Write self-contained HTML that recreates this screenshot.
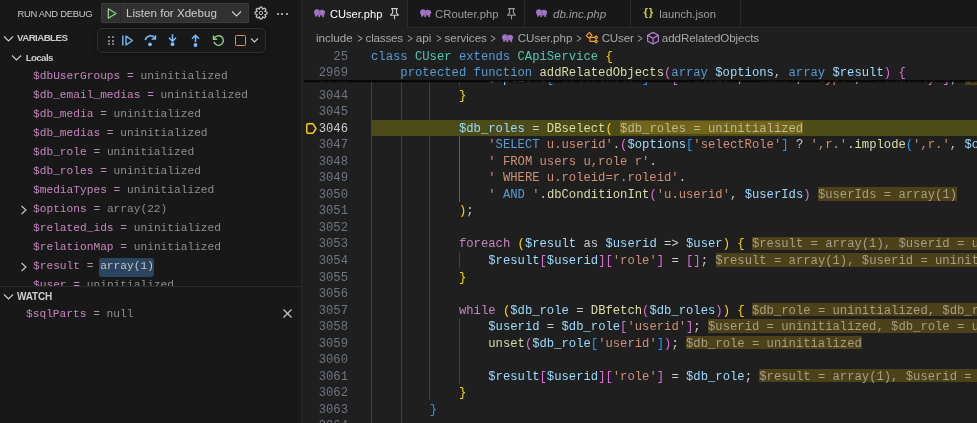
<!DOCTYPE html>
<html><head><meta charset="utf-8">
<style>
*{margin:0;padding:0;box-sizing:border-box}
html,body{width:977px;height:423px;overflow:hidden;background:#181818}
body{position:relative;font-family:"Liberation Sans",sans-serif;color:#cccccc}
#side,#editor{will-change:transform}
.a{position:absolute}
#side{position:absolute;left:0;top:0;width:301px;height:423px;background:#181818;overflow:hidden}
#sideborder{position:absolute;left:301px;top:0;width:1px;height:423px;background:#2b2b2b}
#editor{position:absolute;left:302px;top:0;width:675px;height:423px;background:#1f1f1f;overflow:hidden}
.t{position:absolute;white-space:pre;font-family:"Liberation Sans",sans-serif}
.m{position:absolute;white-space:pre;font-family:"Liberation Mono",monospace}
.vr{font-size:11.2px;line-height:19px;height:19px;color:#8e8e8e}
.vn{color:#c586c0}.eq{color:#b98ab6}
.tab{position:absolute;top:0;height:28px;background:#181818;border-right:1px solid #2b2b2b;border-bottom:1px solid #2b2b2b}
.tab.act{background:#1f1f1f;border-bottom:none}
.tt{position:absolute;top:0;font-size:11.6px;line-height:27px;color:#9d9d9d;white-space:pre}
.act .tt{color:#ffffff}
.bc{position:absolute;top:28px;font-size:11.6px;line-height:19px;color:#a9a9a9;white-space:pre}
.ln{position:absolute;left:0;width:46px;text-align:right;font-family:"Liberation Mono",monospace;font-size:12.215px;white-space:pre;color:#6e7681;height:16.52px;line-height:16.52px}
.cl{position:absolute;left:69.0px;font-family:"Liberation Mono",monospace;font-size:12.215px;white-space:pre;color:#cccccc;height:16.52px;line-height:16.52px}
.g{position:absolute;width:1px;background:#404040}
.g.ac{background:#606060}
.k{color:#569cd6}.c{color:#4ec9b0}.f{color:#dcdcaa}.v{color:#9cdcfe}.s{color:#ce9178}.p{color:#c586c0}
.b1{color:#ffd700}.b2{color:#da70d6}.b3{color:#179fff}.o{color:#cccccc}
.iv{color:#a79f87}
.iv2{color:#c0b894}
</style></head><body>
<div id="side">
<div class="t" style="left:17.5px;top:4px;font-size:9.4px;letter-spacing:-0.26px;line-height:19px;color:#cccccc">RUN AND DEBUG</div>
<div class="a" style="left:101px;top:3px;width:148px;height:20px;background:#313131;border:1px solid #3c3c3c;border-radius:1px"></div>
<div class="a" style="left:120px;top:4px;width:1px;height:18px;background:#2a2a2a"></div>
<svg class="a" style="left:106px;top:7px" width="12" height="13" viewBox="0 0 12 13"><path d="M2.3 1.8 L10 6.5 L2.3 11.2 Z" fill="none" stroke="#89d185" stroke-width="1.3" stroke-linejoin="round"/></svg>
<div class="t" style="left:126px;top:3px;font-size:11.6px;line-height:20px;color:#cccccc">Listen for Xdebug</div>
<svg class="a" style="left:231px;top:9px" width="11" height="9" viewBox="0 0 11 9"><path d="M1 2.5 L5.5 7 L10 2.5" fill="none" stroke="#cccccc" stroke-width="1.1"/></svg>
<svg class="a" style="left:253.4px;top:5.4px" width="16" height="16" viewBox="0 0 16 16"><path fill="none" stroke="#cccccc" stroke-width="1.15" stroke-linejoin="round" d="M11.91 6.47 L13.92 7.01 L13.92 8.99 L11.91 9.53 L11.85 9.68 L12.88 11.49 L11.49 12.88 L9.68 11.85 L9.53 11.91 L8.99 13.92 L7.01 13.92 L6.47 11.91 L6.32 11.85 L4.51 12.88 L3.12 11.49 L4.15 9.68 L4.09 9.53 L2.08 8.99 L2.08 7.01 L4.09 6.47 L4.15 6.32 L3.12 4.51 L4.51 3.12 L6.32 4.15 L6.47 4.09 L7.01 2.08 L8.99 2.08 L9.53 4.09 L9.68 4.15 L11.49 3.12 L12.88 4.51 L11.85 6.32 Z"/><circle cx="8" cy="8" r="1.7" fill="none" stroke="#cccccc" stroke-width="0.9"/></svg>
<div class="a" style="left:276.90px;top:12.6px;width:2px;height:2px;border-radius:50%;background:#d0d0d0"></div>
<div class="a" style="left:281.20px;top:12.6px;width:2px;height:2px;border-radius:50%;background:#d0d0d0"></div>
<div class="a" style="left:285.70px;top:12.6px;width:2px;height:2px;border-radius:50%;background:#d0d0d0"></div>
<svg class="a" style="left:3.3px;top:34px" width="11" height="10" viewBox="0 0 11 10"><path d="M1 2.5 L5.5 7 L10 2.5" fill="none" stroke="#cccccc" stroke-width="1.1"/></svg>
<div class="t" style="left:17px;top:28px;font-size:9.8px;font-weight:bold;letter-spacing:-0.62px;line-height:19px;color:#cccccc">VARIABLES</div>
<svg class="a" style="left:11.3px;top:53px" width="11" height="10" viewBox="0 0 11 10"><path d="M1 2.5 L5.5 7 L10 2.5" fill="none" stroke="#cccccc" stroke-width="1.1"/></svg>
<div class="t" style="left:25.7px;top:47.6px;font-size:9.7px;font-weight:bold;letter-spacing:-0.6px;line-height:19px;color:#cccccc">Locals</div>
<div class="m vr" style="left:33px;top:67.4px"><span class="vn">$dbUserGroups</span><span class="eq"> = </span>uninitialized</div>
<div class="m vr" style="left:33px;top:86.4px"><span class="vn">$db_email_medias</span><span class="eq"> = </span>uninitialized</div>
<div class="m vr" style="left:33px;top:105.4px"><span class="vn">$db_media</span><span class="eq"> = </span>uninitialized</div>
<div class="m vr" style="left:33px;top:124.4px"><span class="vn">$db_medias</span><span class="eq"> = </span>uninitialized</div>
<div class="m vr" style="left:33px;top:143.4px"><span class="vn">$db_role</span><span class="eq"> = </span>uninitialized</div>
<div class="m vr" style="left:33px;top:162.4px"><span class="vn">$db_roles</span><span class="eq"> = </span>uninitialized</div>
<div class="m vr" style="left:33px;top:181.4px"><span class="vn">$mediaTypes</span><span class="eq"> = </span>uninitialized</div>
<svg class="a" style="left:19px;top:205.4px" width="9" height="10" viewBox="0 0 9 10"><path d="M2.5 1 L7 5 L2.5 9" fill="none" stroke="#cccccc" stroke-width="1.1"/></svg>
<div class="m vr" style="left:33px;top:200.4px"><span class="vn">$options</span><span class="eq"> = </span>array(22)</div>
<div class="m vr" style="left:33px;top:219.4px"><span class="vn">$related_ids</span><span class="eq"> = </span>uninitialized</div>
<div class="m vr" style="left:33px;top:238.4px"><span class="vn">$relationMap</span><span class="eq"> = </span>uninitialized</div>
<svg class="a" style="left:19px;top:262.4px" width="9" height="10" viewBox="0 0 9 10"><path d="M2.5 1 L7 5 L2.5 9" fill="none" stroke="#cccccc" stroke-width="1.1"/></svg>
<div class="a" style="left:99px;top:258.0px;width:55px;height:18.6px;background:#2b4560;border-radius:3px"></div>
<div class="m vr" style="left:33px;top:257.4px"><span class="vn">$result</span><span class="eq"> = </span><span style="color:#c4c4c4">array(1)</span></div>
<div class="m vr" style="left:33px;top:276.4px"><span class="vn">$user</span><span class="eq"> = </span>uninitialized</div>
<div class="a" style="left:0;top:286px;width:301px;height:137px;background:#181818;border-top:1px solid #2b2b2b"></div>
<svg class="a" style="left:3.3px;top:292px" width="11" height="10" viewBox="0 0 11 10"><path d="M1 2.5 L5.5 7 L10 2.5" fill="none" stroke="#cccccc" stroke-width="1.1"/></svg>
<div class="t" style="left:17px;top:286.5px;font-size:10px;font-weight:bold;letter-spacing:-0.15px;line-height:19px;color:#cccccc">WATCH</div>
<div class="m vr" style="left:26px;top:304.8px"><span class="vn">$sqlParts</span><span class="eq"> = </span>null</div>
<svg class="a" style="left:282px;top:308px" width="11" height="11" viewBox="0 0 11 11"><path d="M1.5 1.5 L9.5 9.5 M9.5 1.5 L1.5 9.5" fill="none" stroke="#cccccc" stroke-width="1.1"/></svg>
<div class="a" style="left:97px;top:28px;width:169px;height:25px;background:#181818;border:1px solid #313131;border-radius:5px;box-shadow:0 0 6px rgba(0,0,0,0.45)"></div>
<div class="a" style="left:107.8px;top:36px;width:2.2px;height:2.2px;border-radius:0.4px;background:#8f8f8f"></div>
<div class="a" style="left:107.8px;top:39.6px;width:2.2px;height:2.2px;border-radius:0.4px;background:#8f8f8f"></div>
<div class="a" style="left:107.8px;top:43.2px;width:2.2px;height:2.2px;border-radius:0.4px;background:#8f8f8f"></div>
<div class="a" style="left:111.8px;top:36px;width:2.2px;height:2.2px;border-radius:0.4px;background:#8f8f8f"></div>
<div class="a" style="left:111.8px;top:39.6px;width:2.2px;height:2.2px;border-radius:0.4px;background:#8f8f8f"></div>
<div class="a" style="left:111.8px;top:43.2px;width:2.2px;height:2.2px;border-radius:0.4px;background:#8f8f8f"></div>
<svg class="a" style="left:120px;top:33px" width="15" height="15" viewBox="0 0 15 15"><path d="M2.8 2.5 V12.5" stroke="#75beff" stroke-width="1.4"/><path d="M6 3 L12.5 7.5 L6 12 Z" fill="none" stroke="#75beff" stroke-width="1.3" stroke-linejoin="round"/></svg>
<svg class="a" style="left:143px;top:33px" width="15" height="15" viewBox="0 0 15 15"><path d="M2.3 7.2 A5.2 5.2 0 0 1 11.6 5" fill="none" stroke="#75beff" stroke-width="1.5"/><path d="M12.4 2.2 V6 H8.6" fill="none" stroke="#75beff" stroke-width="1.5"/><circle cx="7" cy="11.3" r="1.9" fill="#75beff"/></svg>
<svg class="a" style="left:165px;top:33px" width="15" height="15" viewBox="0 0 15 15"><path d="M7.5 1.3 V8 M4 4.8 L7.5 8.3 L11 4.8" fill="none" stroke="#75beff" stroke-width="1.5"/><circle cx="7.5" cy="11.2" r="1.9" fill="#75beff"/></svg>
<svg class="a" style="left:188px;top:33px" width="15" height="15" viewBox="0 0 15 15"><path d="M7.5 2.2 V9 M4 5.7 L7.5 2.2 L11 5.7" fill="none" stroke="#75beff" stroke-width="1.5"/><circle cx="7.5" cy="12" r="1.9" fill="#75beff"/></svg>
<svg class="a" style="left:211px;top:33px" width="15" height="15" viewBox="0 0 15 15"><path d="M3.2 5.5 A4.8 4.8 0 1 1 3 9" fill="none" stroke="#89d185" stroke-width="1.4"/><path d="M2.5 2.5 V6.2 H6.2" fill="none" stroke="#89d185" stroke-width="1.4"/></svg>
<div class="a" style="left:234.8px;top:34.8px;width:11.4px;height:11.4px;border:1.4px solid #f48771;border-radius:1.5px"></div>
<svg class="a" style="left:250px;top:37px" width="9" height="7" viewBox="0 0 9 7"><path d="M1 1.5 L4.5 5 L8 1.5" fill="none" stroke="#cccccc" stroke-width="1.1"/></svg>
</div>
<div id="sideborder"></div>
<div id="editor">
<div class="g" style="left:69px;top:69.98px;height:363.44px"></div>
<div class="g" style="left:99px;top:69.98px;height:363.44px"></div>
<div class="g" style="left:127px;top:69.98px;height:330.40px"></div>
<div class="g ac" style="left:157px;top:136.06px;height:66.08px"></div>
<div class="g" style="left:157px;top:251.70px;height:16.52px"></div>
<div class="g" style="left:157px;top:317.78px;height:66.08px"></div>
<div class="g" style="left:157px;top:69.98px;height:16.52px"></div>
<div class="a" style="left:69.0px;top:119.54px;width:700px;height:16.52px;background:#4c4c19"></div>
<div class="ln" style="top:71.28px;color:#6e7681">3043</div>
<div class="a" style="left:662.73px;top:71.38px;width:146.10px;height:13.5px;background:#4c4119"></div>
<div class="cl" style="left:186.28px;top:71.28px"><span class="v">$options</span><span class="b3">[</span><span class="s">'selectRole'</span><span class="b3">]</span><span class="o"> = </span><span class="b2">[</span><span class="s">'roleid'</span><span class="o">, </span><span class="s">'name'</span><span class="o">, </span><span class="s">'type'</span><span class="o">, </span><span class="s">'readonly'</span><span class="b2">]</span><span class="o">; </span><span class="iv">$options = array(22)</span></div>
<div class="ln" style="top:87.80px;color:#6e7681">3044</div>
<div class="cl" style="left:156.96px;top:87.80px"><span class="b1">}</span></div>
<div class="ln" style="top:104.32px;color:#6e7681">3045</div>
<div class="ln" style="top:120.84px;color:#cccccc">3046</div>
<div class="a" style="left:318.22px;top:120.94px;width:182.75px;height:13.5px;background:#70651a"></div>
<div class="cl" style="left:156.96px;top:120.84px"><span class="v">$db_roles</span><span class="o"> = </span><span class="f">DBselect</span><span class="b1">(</span><span class="o"> </span><span class="iv2">$db_roles = uninitialized</span></div>
<div class="ln" style="top:137.36px;color:#6e7681">3047</div>
<div class="cl" style="left:186.28px;top:137.36px"><span class="s">'</span><span class="k">SELECT</span><span class="s"> u.userid'</span><span class="o">.</span><span class="b2">(</span><span class="v">$options</span><span class="b3">[</span><span class="s">'selectRole'</span><span class="b3">]</span><span class="o"> ? </span><span class="s">',r.'</span><span class="o">.</span><span class="f">implode</span><span class="b3">(</span><span class="s">',r.'</span><span class="o">, </span><span class="v">$options</span></div>
<div class="ln" style="top:153.88px;color:#6e7681">3048</div>
<div class="cl" style="left:186.28px;top:153.88px"><span class="s">' FROM users u,role r'</span><span class="o">.</span></div>
<div class="ln" style="top:170.40px;color:#6e7681">3049</div>
<div class="cl" style="left:186.28px;top:170.40px"><span class="s">' WHERE u.roleid=r.roleid'</span><span class="o">.</span></div>
<div class="ln" style="top:186.92px;color:#6e7681">3050</div>
<div class="a" style="left:516.13px;top:187.02px;width:138.77px;height:13.5px;background:#4c4119"></div>
<div class="cl" style="left:186.28px;top:186.92px"><span class="s">' </span><span class="k">AND</span><span class="s"> '</span><span class="o">.</span><span class="f">dbConditionInt</span><span class="b2">(</span><span class="s">'u.userid'</span><span class="o">, </span><span class="v">$userIds</span><span class="b2">)</span><span class="o"> </span><span class="iv">$userIds = array(1)</span></div>
<div class="ln" style="top:203.44px;color:#6e7681">3051</div>
<div class="cl" style="left:156.96px;top:203.44px"><span class="b1">)</span><span class="o">;</span></div>
<div class="ln" style="top:219.96px;color:#6e7681">3052</div>
<div class="ln" style="top:236.48px;color:#6e7681">3053</div>
<div class="a" style="left:450.16px;top:236.58px;width:314.69px;height:13.5px;background:#4c4119"></div>
<div class="cl" style="left:156.96px;top:236.48px"><span class="p">foreach</span><span class="o"> </span><span class="b1">(</span><span class="v">$result</span><span class="o"> as </span><span class="v">$userid</span><span class="o"> =&gt; </span><span class="v">$user</span><span class="b1">)</span><span class="o"> </span><span class="b1">{</span><span class="o"> </span><span class="iv">$result = array(1), $userid = uninitialized</span></div>
<div class="ln" style="top:253.00px;color:#6e7681">3054</div>
<div class="a" style="left:413.51px;top:253.10px;width:314.69px;height:13.5px;background:#4c4119"></div>
<div class="cl" style="left:186.28px;top:253.00px"><span class="v">$result</span><span class="b2">[</span><span class="v">$userid</span><span class="b2">]</span><span class="b2">[</span><span class="s">'role'</span><span class="b2">]</span><span class="o"> = </span><span class="b2">[]</span><span class="o">; </span><span class="iv">$result = array(1), $userid = uninitialized</span></div>
<div class="ln" style="top:269.52px;color:#6e7681">3055</div>
<div class="cl" style="left:156.96px;top:269.52px"><span class="b1">}</span></div>
<div class="ln" style="top:286.04px;color:#6e7681">3056</div>
<div class="ln" style="top:302.56px;color:#6e7681">3057</div>
<div class="a" style="left:450.16px;top:302.66px;width:373.33px;height:13.5px;background:#4c4119"></div>
<div class="cl" style="left:156.96px;top:302.56px"><span class="p">while</span><span class="o"> </span><span class="b1">(</span><span class="v">$db_role</span><span class="o"> = </span><span class="f">DBfetch</span><span class="b2">(</span><span class="v">$db_roles</span><span class="b2">)</span><span class="b1">)</span><span class="o"> </span><span class="b1">{</span><span class="o"> </span><span class="iv">$db_role = uninitialized, $db_roles = uninitialized</span></div>
<div class="ln" style="top:319.08px;color:#6e7681">3058</div>
<div class="a" style="left:406.18px;top:319.18px;width:358.67px;height:13.5px;background:#4c4119"></div>
<div class="cl" style="left:186.28px;top:319.08px"><span class="v">$userid</span><span class="o"> = </span><span class="v">$db_role</span><span class="b2">[</span><span class="s">'userid'</span><span class="b2">]</span><span class="o">; </span><span class="iv">$userid = uninitialized, $db_role = uninitialized</span></div>
<div class="ln" style="top:335.60px;color:#6e7681">3059</div>
<div class="a" style="left:384.19px;top:335.70px;width:175.42px;height:13.5px;background:#4c4119"></div>
<div class="cl" style="left:186.28px;top:335.60px"><span class="f">unset</span><span class="b2">(</span><span class="v">$db_role</span><span class="b3">[</span><span class="s">'userid'</span><span class="b3">]</span><span class="b2">)</span><span class="o">; </span><span class="iv">$db_role = uninitialized</span></div>
<div class="ln" style="top:352.12px;color:#6e7681">3060</div>
<div class="ln" style="top:368.64px;color:#6e7681">3061</div>
<div class="a" style="left:457.49px;top:368.74px;width:314.69px;height:13.5px;background:#4c4119"></div>
<div class="cl" style="left:186.28px;top:368.64px"><span class="v">$result</span><span class="b2">[</span><span class="v">$userid</span><span class="b2">]</span><span class="b2">[</span><span class="s">'role'</span><span class="b2">]</span><span class="o"> = </span><span class="v">$db_role</span><span class="o">; </span><span class="iv">$result = array(1), $userid = uninitialized</span></div>
<div class="ln" style="top:385.16px;color:#6e7681">3062</div>
<div class="cl" style="left:156.96px;top:385.16px"><span class="b1">}</span></div>
<div class="ln" style="top:401.68px;color:#6e7681">3063</div>
<div class="cl" style="left:127.64px;top:401.68px"><span class="b3">}</span></div>
<div class="ln" style="top:418.20px;color:#6e7681">3064</div>
<svg class="a" style="left:3px;top:122px" width="14" height="13" viewBox="0 0 14 13"><path d="M2.8 1.8 H8 L11 6.5 L8 11.2 H2.8 Q1.8 11.2 1.8 10.2 V2.8 Q1.8 1.8 2.8 1.8 Z" fill="none" stroke="#ffcc00" stroke-width="1.5" stroke-linejoin="round"/></svg>
<div class="a" style="left:0;top:48px;width:675px;height:33.04px;background:#1f1f1f"></div>
<div class="a" style="left:2px;top:80.44px;width:675px;height:2.6px;background:linear-gradient(rgba(0,0,0,0.5) 0%,#000000 35%,rgba(0,0,0,0.5) 70%,rgba(0,0,0,0) 100%)"></div>
<div class="ln" style="top:49.3px">25</div>
<div class="cl" style="top:49.3px"><span class="k">class</span><span class="o"> </span><span class="c">CUser</span><span class="o"> </span><span class="k">extends</span><span class="o"> </span><span class="c">CApiService</span><span class="o"> </span><span class="b1">{</span></div>
<div class="ln" style="top:65.42px">2969</div>
<div class="cl" style="left:98.32px;top:65.42px"><span class="k">protected</span><span class="o"> </span><span class="k">function</span><span class="o"> </span><span class="f">addRelatedObjects</span><span class="b2">(</span><span class="k">array</span><span class="o"> </span><span class="v">$options</span><span class="o">, </span><span class="k">array</span><span class="o"> </span><span class="v">$result</span><span class="b2">)</span><span class="o"> </span><span class="b2">{</span></div>
<div class="a" style="left:0;top:28px;width:675px;height:20px;background:#1f1f1f"></div>
<div class="bc" style="left:13.9px;letter-spacing:0px">include</div>
<div class="bc" style="left:63.6px;letter-spacing:-0.2px">classes</div>
<div class="bc" style="left:113.8px;letter-spacing:0px">api</div>
<div class="bc" style="left:142.4px;letter-spacing:0px">services</div>
<div class="bc" style="left:215.7px;letter-spacing:0px">CUser.php</div>
<div class="bc" style="left:299.7px;letter-spacing:-0.2px">CUser</div>
<div class="bc" style="left:359.8px;letter-spacing:-0.08px">addRelatedObjects</div>
<svg class="a" style="left:54.7px;top:35px" width="7" height="7" viewBox="0 0 7 7"><path d="M0.8 0.6 L5.2 3.5 L0.8 6.4" fill="none" stroke="#a9a9a9" stroke-width="1"/></svg>
<svg class="a" style="left:104.5px;top:35px" width="7" height="7" viewBox="0 0 7 7"><path d="M0.8 0.6 L5.2 3.5 L0.8 6.4" fill="none" stroke="#a9a9a9" stroke-width="1"/></svg>
<svg class="a" style="left:133.5px;top:35px" width="7" height="7" viewBox="0 0 7 7"><path d="M0.8 0.6 L5.2 3.5 L0.8 6.4" fill="none" stroke="#a9a9a9" stroke-width="1"/></svg>
<svg class="a" style="left:187.8px;top:35px" width="7" height="7" viewBox="0 0 7 7"><path d="M0.8 0.6 L5.2 3.5 L0.8 6.4" fill="none" stroke="#a9a9a9" stroke-width="1"/></svg>
<svg class="a" style="left:274.0px;top:35px" width="7" height="7" viewBox="0 0 7 7"><path d="M0.8 0.6 L5.2 3.5 L0.8 6.4" fill="none" stroke="#a9a9a9" stroke-width="1"/></svg>
<svg class="a" style="left:334.7px;top:35px" width="7" height="7" viewBox="0 0 7 7"><path d="M0.8 0.6 L5.2 3.5 L0.8 6.4" fill="none" stroke="#a9a9a9" stroke-width="1"/></svg>
<svg class="a" style="left:200.3px;top:34.2px" width="12" height="9" viewBox="0 0 12 9"><ellipse cx="7.7" cy="3.6" rx="3.3" ry="2.8" fill="#a074c4"/><path d="M10.3 2 L11.3 3.4 L10.6 4.6 Z" fill="#a074c4"/><rect x="4.3" y="4.6" width="1.8" height="3.6" rx="0.8" fill="#a074c4"/><rect x="8.3" y="4.6" width="1.8" height="3.6" rx="0.8" fill="#a074c4"/><path d="M5.9 0.6 Q4.8 3 5.8 5.2" fill="none" stroke="#1f1f1f" stroke-width="0.9"/><ellipse cx="3.0" cy="3.3" rx="2.9" ry="3.1" fill="#a074c4"/><rect x="1.1" y="4.5" width="1.9" height="3.3" rx="0.8" fill="#a074c4"/></svg>
<svg class="a" style="left:283px;top:31px" width="14" height="14" viewBox="0 0 14 14" fill="none" stroke="#ee9d28" stroke-width="1.2" stroke-linejoin="round"><path d="M1.3 4.6 L4.4 1.5 L7 4.1 L3.9 7.2 Z"/><path d="M5 6 V10.3 H10.3 M5 6.3 H10.3"/><path d="M9.6 6.3 L11.1 4.8 L12.6 6.3 L11.1 7.8 Z"/><path d="M9.6 10.3 L11.1 8.8 L12.6 10.3 L11.1 11.8 Z"/></svg>
<svg class="a" style="left:344px;top:31px" width="14" height="14" viewBox="0 0 14 14" fill="none" stroke="#b180d7" stroke-width="1.2" stroke-linejoin="round"><path d="M7 1.4 L12.4 4.3 V10.2 L7 13 L1.6 10.2 V4.3 Z"/><path d="M1.8 4.4 L7 7.2 L12.2 4.4 M7 7.2 V12.8"/></svg>
<div class="a" style="left:0;top:0;width:675px;height:28px;background:#181818;border-bottom:1px solid #2b2b2b"></div>
<div class="a" style="left:0;top:0;width:105px;height:28px;background:#1f1f1f"></div>
<div class="a" style="left:105px;top:0;width:1px;height:27px;background:#2b2b2b"></div>
<div class="a" style="left:222px;top:0;width:1px;height:27px;background:#2b2b2b"></div>
<div class="a" style="left:328px;top:0;width:1px;height:27px;background:#2b2b2b"></div>
<div class="a" style="left:438px;top:0;width:1px;height:27px;background:#2b2b2b"></div>
<svg class="a" style="left:12.0px;top:8.7px" width="12" height="9" viewBox="0 0 12 9"><ellipse cx="7.7" cy="3.6" rx="3.3" ry="2.8" fill="#a074c4"/><path d="M10.3 2 L11.3 3.4 L10.6 4.6 Z" fill="#a074c4"/><rect x="4.3" y="4.6" width="1.8" height="3.6" rx="0.8" fill="#a074c4"/><rect x="8.3" y="4.6" width="1.8" height="3.6" rx="0.8" fill="#a074c4"/><path d="M5.9 0.6 Q4.8 3 5.8 5.2" fill="none" stroke="#1f1f1f" stroke-width="0.9"/><ellipse cx="3.0" cy="3.3" rx="2.9" ry="3.1" fill="#a074c4"/><rect x="1.1" y="4.5" width="1.9" height="3.3" rx="0.8" fill="#a074c4"/></svg>
<div class="tt" style="left:27.9px;top:1px;color:#ffffff;font-size:11.1px">CUser.php</div>
<svg class="a" style="left:87.0px;top:7px" width="11" height="13" viewBox="0 0 11 13" fill="none" stroke="#cccccc" stroke-width="1.1" stroke-linejoin="round"><path d="M2.6 1.6 H8.4 L7.4 2.9 V5.8 L9.4 8.2 H1.6 L3.6 5.8 V2.9 Z"/><path d="M5.5 8.2 V12.3"/></svg>
<svg class="a" style="left:117.6px;top:8.7px" width="12" height="9" viewBox="0 0 12 9"><ellipse cx="7.7" cy="3.6" rx="3.3" ry="2.8" fill="#a074c4"/><path d="M10.3 2 L11.3 3.4 L10.6 4.6 Z" fill="#a074c4"/><rect x="4.3" y="4.6" width="1.8" height="3.6" rx="0.8" fill="#a074c4"/><rect x="8.3" y="4.6" width="1.8" height="3.6" rx="0.8" fill="#a074c4"/><path d="M5.9 0.6 Q4.8 3 5.8 5.2" fill="none" stroke="#181818" stroke-width="0.9"/><ellipse cx="3.0" cy="3.3" rx="2.9" ry="3.1" fill="#a074c4"/><rect x="1.1" y="4.5" width="1.9" height="3.3" rx="0.8" fill="#a074c4"/></svg>
<div class="tt" style="left:133.1px;top:1px;font-size:11.3px">CRouter.php</div>
<svg class="a" style="left:203.5px;top:7px" width="11" height="13" viewBox="0 0 11 13" fill="none" stroke="#9d9d9d" stroke-width="1.1" stroke-linejoin="round"><path d="M2.6 1.6 H8.4 L7.4 2.9 V5.8 L9.4 8.2 H1.6 L3.6 5.8 V2.9 Z"/><path d="M5.5 8.2 V12.3"/></svg>
<svg class="a" style="left:234.0px;top:8.7px" width="12" height="9" viewBox="0 0 12 9"><ellipse cx="7.7" cy="3.6" rx="3.3" ry="2.8" fill="#a074c4"/><path d="M10.3 2 L11.3 3.4 L10.6 4.6 Z" fill="#a074c4"/><rect x="4.3" y="4.6" width="1.8" height="3.6" rx="0.8" fill="#a074c4"/><rect x="8.3" y="4.6" width="1.8" height="3.6" rx="0.8" fill="#a074c4"/><path d="M5.9 0.6 Q4.8 3 5.8 5.2" fill="none" stroke="#181818" stroke-width="0.9"/><ellipse cx="3.0" cy="3.3" rx="2.9" ry="3.1" fill="#a074c4"/><rect x="1.1" y="4.5" width="1.9" height="3.3" rx="0.8" fill="#a074c4"/></svg>
<div class="tt" style="left:251.0px;top:1px;font-style:italic;font-size:11.5px">db.inc.php</div>
<div class="t" style="left:341.6px;top:-0.8px;font-size:11.5px;line-height:27px;color:#cbcb41;font-weight:bold;letter-spacing:0.7px">{}</div>
<div class="tt" style="left:357.2px;top:1px;font-size:11.25px">launch.json</div>
</div>
</body></html>
